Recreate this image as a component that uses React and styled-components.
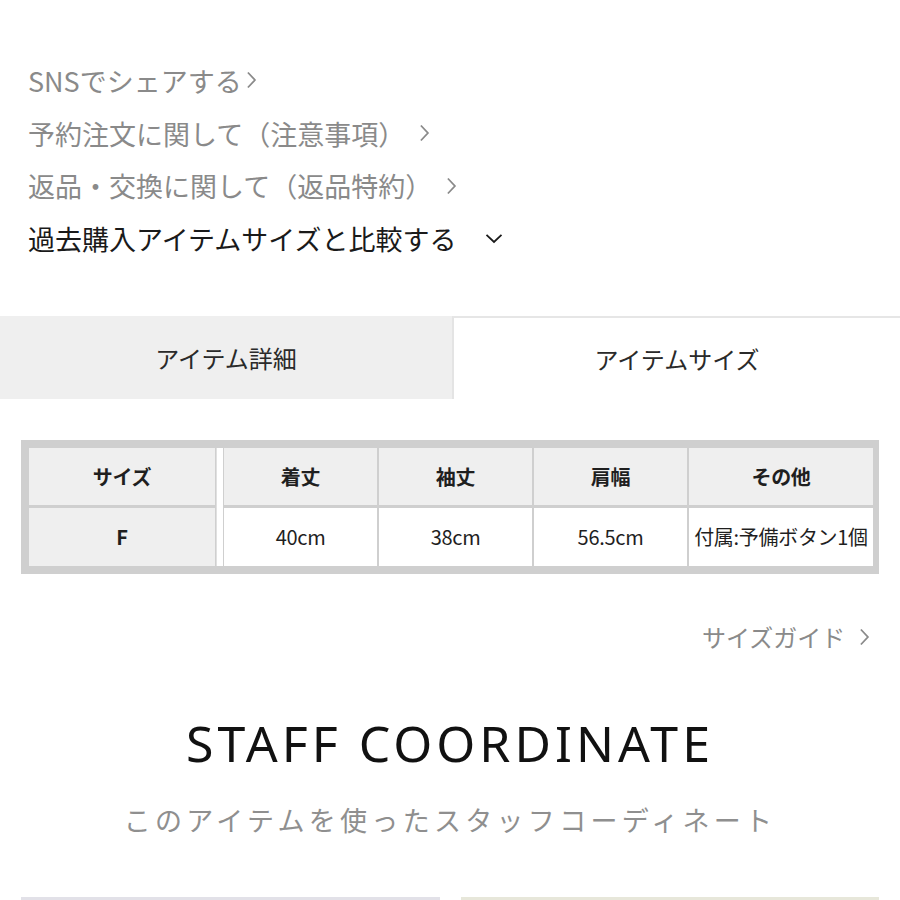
import React from "react";
import styled, { createGlobalStyle } from "styled-components";

const Global = createGlobalStyle`
  html, body { margin: 0; padding: 0; background: #fff; }
  body { font-family: "Noto Sans CJK JP", "Noto Sans", sans-serif; }
`;

const Page = styled.div`
  width: 900px;
  height: 900px;
  overflow: hidden;
  display: flex;
  flex-direction: column;
  & > * { flex-shrink: 0; }
`;

const LinkList = styled.ul`
  list-style: none;
  margin: 0;
  padding: 54px 0 0 28px;
  display: flex;
  flex-direction: column;
`;

const LinkItem = styled.li`
  display: flex;
  align-items: center;
  height: 52.7px;
  font-size: 27px;
  color: ${(p) => (p.$dark ? "#1a1a1a" : "#8a8a8a")};
  gap: ${(p) => p.$gap || 4}px;
`;

const Chevron = ({ dir = "right", color = "#8a8a8a", size = 18 }) =>
  dir === "right" ? (
    <svg width={size * 0.6} height={size} viewBox="0 0 10 18" fill="none">
      <path d="M1.5 1.5 L8.5 9 L1.5 16.5" stroke={color} strokeWidth="1.8" />
    </svg>
  ) : (
    <svg width={size} height={size * 0.6} viewBox="0 0 18 10" fill="none">
      <path d="M1.5 1.5 L9 8.5 L16.5 1.5" stroke={color} strokeWidth="1.8" />
    </svg>
  );

const Tabs = styled.div`
  margin-top: 51px;
  display: grid;
  grid-template-columns: 452px 1fr;
  height: 83px;
`;

const Tab = styled.div`
  display: flex;
  align-items: center;
  justify-content: center;
  font-size: 24px;
  color: #2a2a2a;
  background: ${(p) => (p.$active ? "#fff" : "#efefef")};
  border-top: ${(p) => (p.$active ? "2px solid #e6e6e6" : "none")};
  border-left: ${(p) => (p.$active ? "2px solid #e4e4e4" : "none")};
  box-sizing: border-box;
`;

const TableWrap = styled.div`
  margin: 41px 21px 0 21px;
  background: #cfcfcf;
  padding: 8px 6px 8px 8px;
  display: flex;
`;

const FixedCol = styled.div`
  width: 186px;
  display: flex;
  flex-direction: column;
  gap: 3px;
`;

const Divider = styled.div`
  width: 7px;
  margin: 0 1px;
  background: #fff;
  border-left: 1px solid #e0e0e0;
  box-sizing: border-box;
`;

const Grid = styled.div`
  flex: 1;
  display: grid;
  grid-template-columns: 153px 153px 153px 1fr;
  grid-template-rows: 57px 58px;
  gap: 3px 2px;
`;

const Cell = styled.div`
  display: flex;
  align-items: center;
  justify-content: center;
  height: ${(p) => (p.$h ? p.$h + "px" : "auto")};
  background: ${(p) => (p.$head ? "#efefef" : "#fff")};
  font-size: 20px;
  font-weight: ${(p) => (p.$bold ? 700 : 400)};
  color: #1f1f1f;
  white-space: nowrap;
  overflow: hidden;
  letter-spacing: -0.3px;
`;

const GuideRow = styled.div`
  display: flex;
  justify-content: flex-end;
  align-items: center;
  gap: 14px;
  padding: 48px 30px 0 0;
  height: 30px;
  font-size: 24px;
  color: #8a8a8a;
`;

const Title = styled.h2`
  margin: 61px 0 0 0;
  text-align: center;
  font-family: "Noto Sans", sans-serif;
  font-weight: 400;
  font-size: 50px;
  line-height: 60px;
  letter-spacing: 4px;
  color: #111;
`;

const Subtitle = styled.p`
  margin: 27px 0 0 0;
  text-align: center;
  font-size: 27px;
  line-height: 40px;
  letter-spacing: 4.3px;
  color: #8f8f8f;
`;

const Cards = styled.div`
  margin-top: 57px;
  padding: 0 21px;
  display: grid;
  grid-template-columns: 1fr 1fr;
  gap: 21px;
`;

const Card = styled.div`
  height: 40px;
  background: ${(p) => p.$bg};
`;

export default function App() {
  return (
    <Page>
      <Global />
      <LinkList>
        <LinkItem>
          SNSでシェアする
          <Chevron />
        </LinkItem>
        <LinkItem $gap={14}>
          予約注文に関して（注意事項）
          <Chevron />
        </LinkItem>
        <LinkItem $gap={14}>
          返品・交換に関して（返品特約）
          <Chevron />
        </LinkItem>
        <LinkItem $dark $gap={28}>
          過去購入アイテムサイズと比較する
          <Chevron dir="down" color="#1a1a1a" />
        </LinkItem>
      </LinkList>

      <Tabs>
        <Tab>アイテム詳細</Tab>
        <Tab $active>アイテムサイズ</Tab>
      </Tabs>

      <TableWrap>
        <FixedCol>
          <Cell $head $bold $h={57}>サイズ</Cell>
          <Cell $head $bold $h={58}>F</Cell>
        </FixedCol>
        <Divider />
        <Grid>
          <Cell $head $bold>着丈</Cell>
          <Cell $head $bold>袖丈</Cell>
          <Cell $head $bold>肩幅</Cell>
          <Cell $head $bold>その他</Cell>
          <Cell>40cm</Cell>
          <Cell>38cm</Cell>
          <Cell>56.5cm</Cell>
          <Cell>付属:予備ボタン1個</Cell>
        </Grid>
      </TableWrap>

      <GuideRow>
        サイズガイド
        <Chevron />
      </GuideRow>

      <Title>STAFF COORDINATE</Title>
      <Subtitle>このアイテムを使ったスタッフコーディネート</Subtitle>

      <Cards>
        <Card $bg="#e2e1e8" />
        <Card $bg="#e7e7da" />
      </Cards>
    </Page>
  );
}
